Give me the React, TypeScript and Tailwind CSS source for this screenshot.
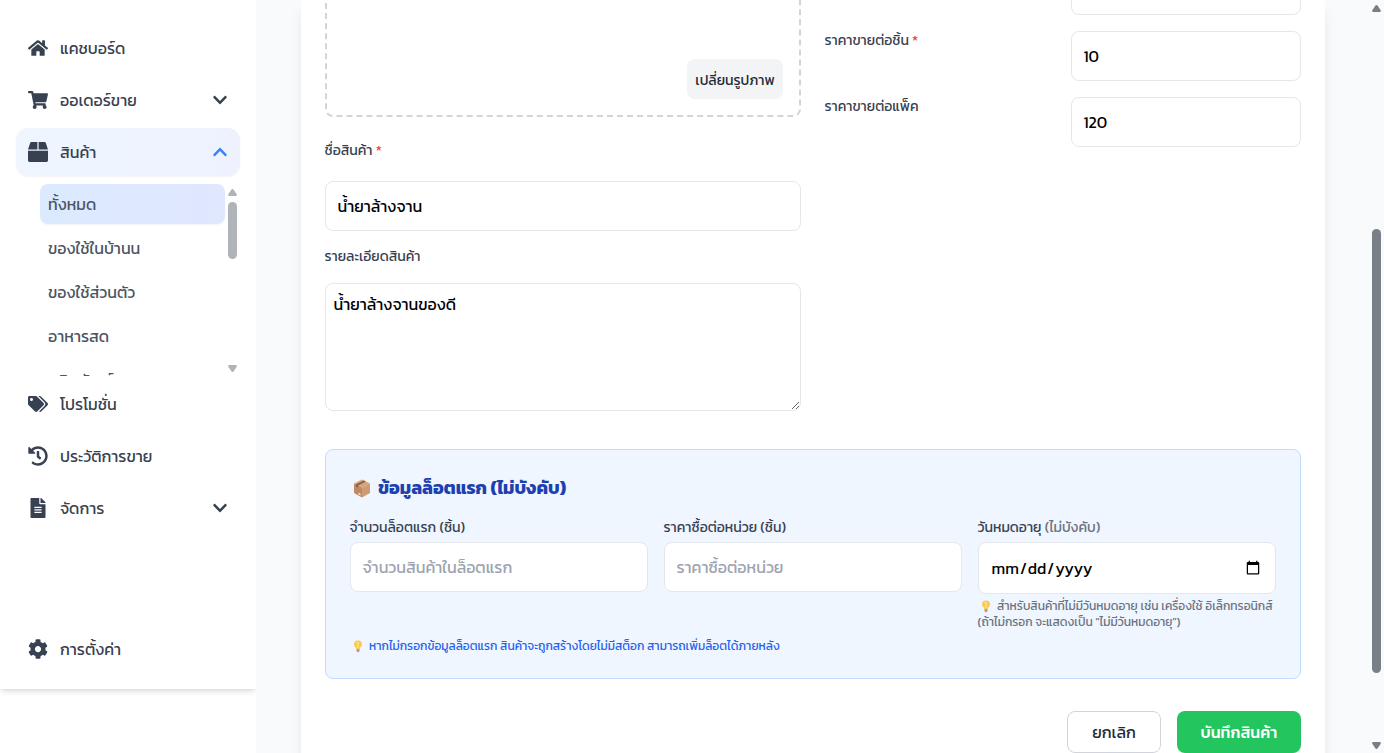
import type { ComponentType, ReactNode } from "react";
import { FaHome, FaShoppingCart, FaBox, FaTags, FaHistory, FaFileAlt, FaCog, FaChevronDown, FaChevronUp } from "react-icons/fa";

type IconType = ComponentType<{ className?: string }>;

function NavItem({ icon: Icon, label, arrow, active }: { icon: IconType; label: ReactNode; arrow?: "up" | "down"; active?: boolean }) {
  return (
    <div
      className={
        "flex h-12 shrink-0 items-center rounded-xl px-3 text-[#374151] " +
        (active ? "bg-gradient-to-r from-[#eff6ff] to-[#eef2ff] shadow-[0_1px_2px_0_rgb(0_0_0/0.05)]" : "")
      }
    >
      <Icon className="size-5 shrink-0" />
      <span className="ml-3 flex-1 whitespace-nowrap text-base">{label}</span>
      {arrow === "down" && <FaChevronDown className="size-4" />}
      {arrow === "up" && <FaChevronUp className="size-4 text-[#3b82f6]" />}
    </div>
  );
}

function SubItem({ label, active }: { label: string; active?: boolean }) {
  return (
    <div
      className={
        "flex h-10 shrink-0 items-center rounded-lg px-2 text-base whitespace-nowrap text-[#4b5563] " +
        (active ? "bg-gradient-to-r from-[#dbeafe] to-[#e0e7ff] shadow-[0_1px_2px_0_rgb(0_0_0/0.05)]" : "")
      }
    >
      <span>{label}</span>
    </div>
  );
}

function Arrow({ up }: { up?: boolean }) {
  return (
    <svg viewBox="0 0 9 7" className="ml-px h-[7px] w-[9px] shrink-0" fill="currentColor">
      <path d={up ? "M4.500 0Q5.300 0 5.700 .7L8.700 5.200Q9.300 7 7.700 7H1.300Q-.3 7 .3 5.200L3.300 .7Q3.700 0 4.500 0Z" : "M4.500 7Q5.300 7 5.700 6.300L8.700 1.800Q9.300 0 7.700 0H1.300Q-.3 0 .3 1.800L3.300 6.300Q3.700 7 4.500 7Z"} />
    </svg>
  );
}

function PackageEmoji() {
  return (
    <svg viewBox="0 0 18 19" className="h-[19px] w-[18px] shrink-0">
      <path d="M9 .5 17 4.500 9 8.500 1 4.500Z" fill="#d9a47a" />
      <path d="M1 4.500 9 8.500V18.500L1 14Z" fill="#c08a60" />
      <path d="M17 4.500 9 8.500V18.500L17 14Z" fill="#cf9b72" />
      <path d="M3 5.500 11 1.500 12.800 2.400 5 6.500V8.500L3 7.500Z" fill="#875a44" />
      <path d="m5.500 13.600 2 1.100v1.800l-2-1.100Z" fill="#efe0d8" />
    </svg>
  );
}

function BulbEmoji() {
  return (
    <svg viewBox="0 0 10 13" className="h-[13px] w-2.5 shrink-0">
      <path d="M5 .5A4 4 0 0 0 1 4.500C1 6.500 3 7.300 3.200 9H6.800C7 7.300 9 6.500 9 4.500A4 4 0 0 0 5 .5Z" fill="#fdc94d" />
      <path d="M3.400 2.800Q5.500 2 5.200 4.200T5 8.300" stroke="#ffe792" strokeWidth="1.300" fill="none" />
      <path d="M3.500 9H6.500V11.300Q5 13.200 3.500 11.300Z" fill="#ab9aa8" />
    </svg>
  );
}

function Box({ children }: { children?: ReactNode }) {
  return (
    <div className="flex h-[50px] items-center rounded-lg border border-[#e5e7eb] bg-white px-3 text-base whitespace-nowrap text-black">
      {children}
    </div>
  );
}

function Label({ children }: { children: ReactNode }) {
  return <div className="h-5 text-sm/5 whitespace-nowrap text-[#374151]">{children}</div>;
}

export default function App() {
  return (
    <div className="flex h-[753px] w-[1384px] overflow-hidden bg-[#f8fafc] font-[Kanit,'Noto_Sans_Thai',Roboto,sans-serif]">
      <aside className="h-full w-64 shrink-0 overflow-hidden bg-white">
        <div className="flex h-[689px] flex-col bg-white px-4 pt-6 pb-4 shadow-md">
          <nav className="flex flex-1 flex-col gap-1">
            <NavItem icon={FaHome} label="แคชบอร์ด" />
            <NavItem icon={FaShoppingCart} label="ออเดอร์ขาย" arrow="down" />
            <NavItem icon={FaBox} label="สินค้า" arrow="up" active />
            <div className="mt-1 ml-6 flex h-48 overflow-hidden">
              <div className="flex w-[185px] flex-col gap-1">
                <SubItem label="ทั้งหมด" active />
                <SubItem label="ของใช้ในบ้านน" />
                <SubItem label="ของใช้ส่วนตัว" />
                <SubItem label="อาหารสด" />
                <SubItem label="ผลิตภัณฑ์" />
              </div>
              <div className="flex w-[15px] flex-col items-start pt-[5px] pb-1 pl-0.5 text-[#b0b3b8]">
                <Arrow up />
                <div className="mt-[6px] ml-px h-[57px] w-[9px] rounded-full bg-[#b0b3b8]" />
                <div className="flex-1" />
                <Arrow />
              </div>
            </div>
            <NavItem icon={FaTags} label="โปรโมชั่น" />
            <NavItem icon={FaHistory} label="ประวัติการขาย" />
            <NavItem icon={FaFileAlt} label="จัดการ" arrow="down" />
          </nav>
          <NavItem icon={FaCog} label="การตั้งค่า" />
        </div>
      </aside>

      <main className="flex flex-1 overflow-hidden pl-[44.5px]">
        <div className="h-[800px] w-[1024px] bg-white px-6 shadow-lg">
          <div className="flex gap-6">
            <div className="flex w-[476px] flex-col">
              <div className="-mt-[139px] flex h-64 items-end justify-end rounded-lg border-2 border-dashed border-[#d1d5db] p-4">
                <button className="h-10 w-24 rounded-lg bg-[#f3f4f6] pt-[3px] pl-px text-sm whitespace-nowrap text-[#1f2937]">เปลี่ยนรูปภาพ</button>
              </div>
              <div className="mt-6 mb-5">
                <Label>
                  ชื่อสินค้า <span className="text-[#ef4444]">*</span>
                </Label>
              </div>
              <Box>น้ำยาล้างจาน</Box>
              <div className="mt-4 mb-4">
                <Label>รายละเอียดสินค้า</Label>
              </div>
              <textarea
                className="block h-32 w-full rounded-lg border border-[#e5e7eb] p-2 text-base/6 text-black"
                defaultValue="น้ำยาล้างจานของดี"
              />
            </div>
            <div className="-mt-[35px] grid h-[182px] w-[476px] grid-cols-[230px_230px] gap-4">
              <div />
              <Box />
              <Label>
                ราคาขายต่อชิ้น <span className="text-[#ef4444]">*</span>
              </Label>
              <Box>10</Box>
              <Label>ราคาขายต่อแพ็ค</Label>
              <Box>120</Box>
            </div>
          </div>

          <section className="mt-[38px] flex h-[230px] flex-col rounded-lg border border-[#bfdbfe] bg-[#eff6ff] px-6 pt-6 pb-6">
            <h3 className="flex h-7 items-center gap-[7px] pl-[3.5px] text-lg/7 font-bold whitespace-nowrap text-[#1e40af]">
              <PackageEmoji />
              <span>ข้อมูลล็อตแรก (ไม่บังคับ)</span>
            </h3>
            <div className="mt-4 grid grid-cols-3 gap-4">
              <div className="flex flex-col gap-1">
                <Label>จำนวนล็อตแรก (ชิ้น)</Label>
                <Box>
                  <span className="text-[#9ca3af]">จำนวนสินค้าในล็อตแรก</span>
                </Box>
              </div>
              <div className="flex flex-col gap-1">
                <Label>ราคาซื้อต่อหน่วย (ชิ้น)</Label>
                <Box>
                  <span className="text-[#9ca3af]">ราคาซื้อต่อหน่วย</span>
                </Box>
              </div>
              <div className="flex flex-col gap-1">
                <Label>
                  วันหมดอายุ <span className="text-[#6b7280]">(ไม่บังคับ)</span>
                </Label>
                <input
                  type="date"
                  className="block h-[52px] w-full rounded-lg border border-[#e5e7eb] bg-white px-3 text-base text-black"
                />
                <div className="text-xs/4 whitespace-nowrap text-[#6b7280]">
                  <div className="flex items-center gap-[6.500px] pl-[3px]">
                    <BulbEmoji />
                    <span>สำหรับสินค้าที่ไม่มีวันหมดอายุ เช่น เครื่องใช้ อิเล็กทรอนิกส์</span>
                  </div>
                  <div>
                    <span>(ถ้าไม่กรอก จะแสดงเป็น "ไม่มีวันหมดอายุ")</span>
                  </div>
                </div>
              </div>
            </div>
            <div className="mt-2 flex items-center gap-[6.500px] pl-[3px] text-xs/4 whitespace-nowrap text-[#2563eb]">
              <BulbEmoji />
              <span>หากไม่กรอกข้อมูลล็อตแรก สินค้าจะถูกสร้างโดยไม่มีสต็อก สามารถเพิ่มล็อตได้ภายหลัง</span>
            </div>
          </section>

          <div className="mt-8 flex justify-end gap-4">
            <button className="h-[42px] w-[94px] rounded-lg border border-[#d1d5db] bg-white pl-px text-base text-[#1f2937]">ยกเลิก</button>
            <button className="h-[42px] w-[124px] rounded-lg bg-[#22c55e] pl-px text-base font-medium text-white">บันทึกสินค้า</button>
          </div>
        </div>
        <div className="flex-1" />
        <div className="z-10 flex w-[15px] flex-col items-start pt-[5px] pb-1 pl-0.5 text-[#787f87]">
          <Arrow up />
          <div className="mt-[217px] ml-px h-[444px] w-[9px] rounded-full bg-[#787f87]" />
          <div className="flex-1" />
          <Arrow />
        </div>
      </main>
    </div>
  );
}
